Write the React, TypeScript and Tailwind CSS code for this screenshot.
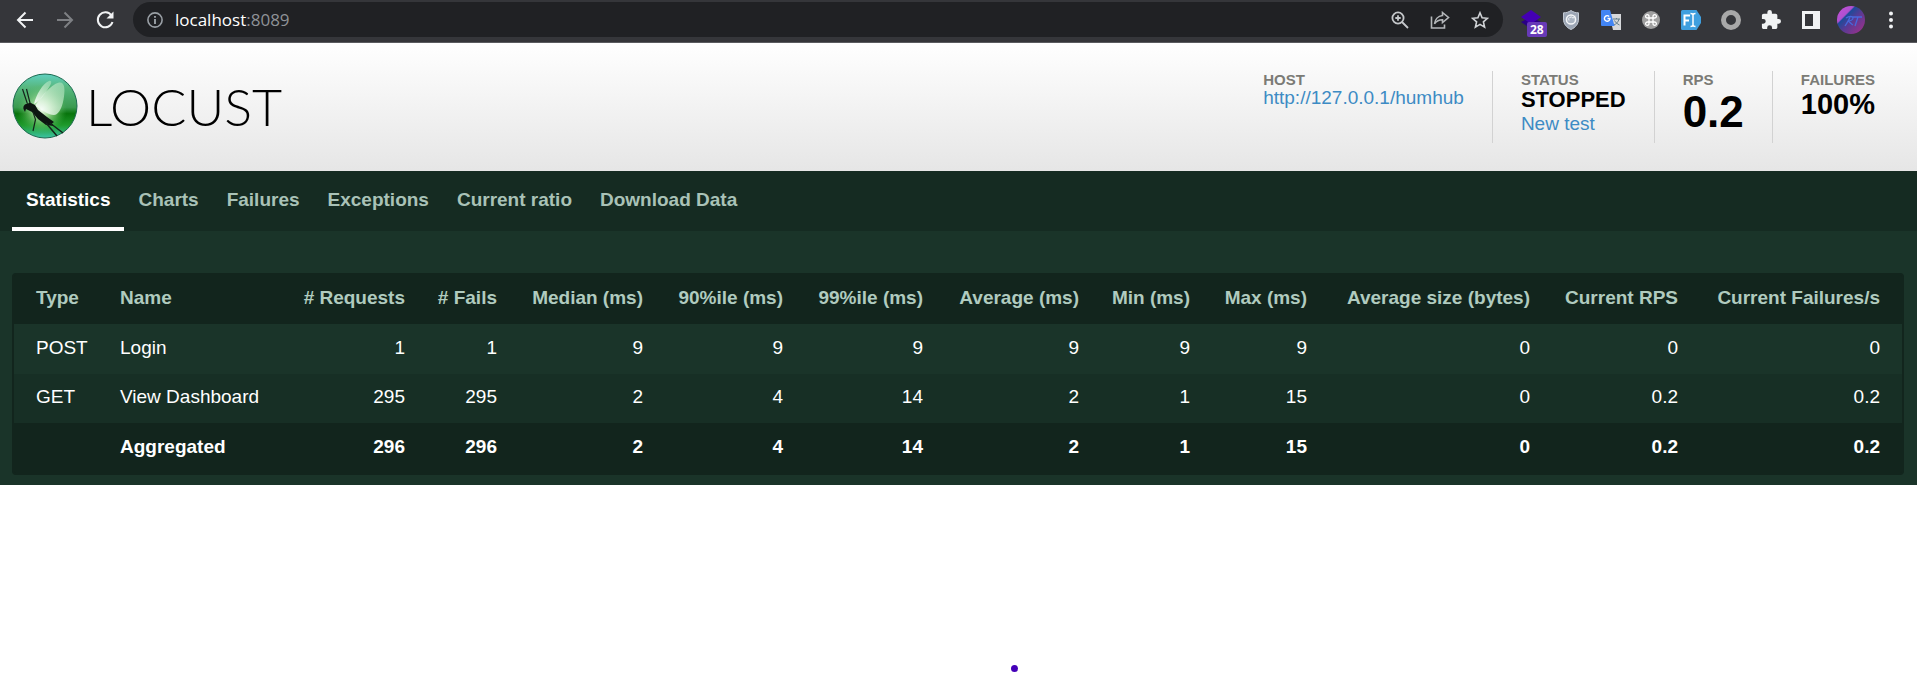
import type { ReactNode } from 'react';

const columns = [
  { label: 'Type', col: 'w-[84px]' },
  { label: 'Name', col: 'w-[184px]' },
  { label: '# Requests', col: 'w-[145px]' },
  { label: '# Fails', col: 'w-[92px]' },
  { label: 'Median (ms)', col: 'w-[146px]' },
  { label: '90%ile (ms)', col: 'w-[140px]' },
  { label: '99%ile (ms)', col: 'w-[140px]' },
  { label: 'Average (ms)', col: 'w-[156px]' },
  { label: 'Min (ms)', col: 'w-[111px]' },
  { label: 'Max (ms)', col: 'w-[117px]' },
  { label: 'Average size (bytes)', col: 'w-[223px]' },
  { label: 'Current RPS', col: 'w-[148px]' },
  { label: 'Current Failures/s', col: 'w-[202px]' },
];

const rows = [
  ['POST', 'Login', '1', '1', '9', '9', '9', '9', '9', '9', '0', '0', '0'],
  ['GET', 'View Dashboard', '295', '295', '2', '4', '14', '2', '1', '15', '0', '0.2', '0.2'],
];
const total = ['', 'Aggregated', '296', '296', '2', '4', '14', '2', '1', '15', '0', '0.2', '0.2'];

const tabs = ['Statistics', 'Charts', 'Failures', 'Exceptions', 'Current ratio', 'Download Data'];

function IconButton({ label, children }: { label: string; children: ReactNode }) {
  return (
    <button type="button" aria-label={label} className="flex h-[35px] w-10 shrink-0 items-center justify-center">
      {children}
    </button>
  );
}

function BrowserBar() {
  return (
    <div className="flex h-[43px] items-start gap-2 border-b border-[#5b5c60] bg-[#35363a] pt-[2px] pr-[6px] pl-[5px]">
      <div className="flex">
        <IconButton label="Back">
          <svg width="18" height="18" viewBox="0 0 18 18" fill="none" stroke="#f1f3f4" strokeWidth="2">
            <path d="M17 9H2M9.5 1.5 2 9l7.500 7.500" />
          </svg>
        </IconButton>
        <IconButton label="Forward">
          <svg width="18" height="18" viewBox="0 0 18 18" fill="none" stroke="#7e8084" strokeWidth="2">
            <path d="M1 9h15M8.500 1.500 16 9l-7.500 7.500" />
          </svg>
        </IconButton>
        <IconButton label="Reload">
          <svg width="20" height="20" viewBox="0 0 20 20" fill="none" stroke="#f1f3f4" strokeWidth="2">
            <path d="M16.500 5.500A7.500 7.500 0 1 0 17.500 12" />
            <path d="M18.500 1.500v7h-7z" fill="#f1f3f4" stroke="none" />
          </svg>
        </IconButton>
      </div>
      <div className="flex h-[35px] min-w-0 flex-1 items-center rounded-full bg-[#202124] pr-[3px] pl-[14px]">
        <svg width="16" height="16" viewBox="0 0 16 16" className="shrink-0" fill="none" stroke="#9aa0a6" strokeWidth="1.6">
          <circle cx="8" cy="8" r="7.100" />
          <path d="M8 7v5M8 4v1.800" strokeWidth="1.900" />
        </svg>
        <div className="min-w-0 flex-1 pl-3 font-['Open_Sans',sans-serif] text-[17px] leading-6 text-white">
          localhost<span className="text-[#8f9297]">:8089</span>
        </div>
        <IconButton label="Zoom">
          <svg width="18" height="18" viewBox="0 0 18 18" fill="none" stroke="#c4c7ca" strokeWidth="1.800">
            <circle cx="7" cy="7" r="5.600" />
            <path d="M11 11l6 6M4.300 7h5.400M7 4.300v5.400" />
          </svg>
        </IconButton>
        <IconButton label="Share">
          <svg width="20" height="18" viewBox="0 0 20 18" fill="none" stroke="#b4b7ba" strokeWidth="1.600">
            <path d="M1.500 5.500v11.500H14.500V13.500" />
            <path d="M12.500 1.500 18.500 6.500 12.500 11.500V8.700C9 8.700 6.500 10 4.500 12.800 5 8.500 8 5 12.500 4.500z" />
          </svg>
        </IconButton>
        <IconButton label="Bookmark">
          <svg width="18" height="18" viewBox="0 0 18 18" fill="none" stroke="#d0d3d6" strokeWidth="1.600">
            <path d="M9 1.800l2.100 5 5.300.5-4 3.600 1.200 5.300L9 13.400l-4.600 2.800 1.200-5.300-4-3.600 5.300-.5z" />
          </svg>
        </IconButton>
      </div>
      <div className="flex">
        <IconButton label="Layers, 28 items">
          <span className="relative flex h-7 w-7 items-center justify-center">
            <svg width="22" height="20" viewBox="0 0 22 20">
              <path d="M1 12l10-5 10 5-10 7z" fill="#2a0084" />
              <path d="M11 0l10 7-10 7L1 7z" fill="#4400b4" />
            </svg>
            <span className="absolute top-4 left-[10px] rounded-[2px] bg-[#673ab7] px-[3px] font-['Open_Sans',sans-serif] text-[12px] leading-[15px] font-bold text-white">
              28
            </span>
          </span>
        </IconButton>
        <IconButton label="Shield">
          <svg width="18" height="20" viewBox="0 0 18 20">
            <path d="M9 .5c2.500 1.800 5 2.300 7.500 2.300V9c0 5-3 8.500-7.500 10.500C4.500 17.500 1.500 14 1.500 9V2.800C4 2.800 6.500 2.300 9 .5z" fill="#9ba5b4" stroke="#c3cad3" />
            <circle cx="9" cy="9.500" r="4.600" fill="#aab4c1" stroke="#f4f6f8" strokeWidth="1.500" />
            <path d="M7 10.500A2.300 2.300 0 0 1 11 8.200l2.500-2.200" fill="none" stroke="#f4f6f8" />
          </svg>
        </IconButton>
        <IconButton label="Translate">
          <svg width="20" height="20" viewBox="0 0 20 20">
            <path d="M8 4h12v16h-8z" fill="#d6d8da" />
            <path d="M12 9h7M15.500 8v1M18 9c-.5 3-3 5-5 6M13.500 10.500c1 2 3 3.500 5 4.500" stroke="#607d8b" fill="none" />
            <path d="M0 1a1 1 0 0 1 1-1h8l4.500 16H1a1 1 0 0 1-1-1z" fill="#4285f4" />
            <path d="M8.200 6.500A2.800 2.800 0 1 0 9 8.500H6.500" stroke="#fff" strokeWidth="1.400" fill="none" />
          </svg>
        </IconButton>
        <IconButton label="Shortcuts">
          <svg width="18" height="18" viewBox="0 0 18 18">
            <circle cx="9" cy="9" r="9" fill="#a0a0a0" />
            <path d="M7 7h4v4H7zM7 7H5.500A1.700 1.700 0 1 1 7 5.500zM11 7V5.500A1.700 1.700 0 1 1 12.500 7zM11 11h1.500a1.700 1.700 0 1 1-1.500 1.500zM7 11v1.500A1.700 1.700 0 1 1 5.500 11z" fill="none" stroke="#fff" strokeWidth="1.300" />
          </svg>
        </IconButton>
        <IconButton label="Font finder">
          <svg width="20" height="20" viewBox="0 0 20 20">
            <path d="M1.500 0H15.500L20 7v6l-4.500 7H1.500A1.500 1.500 0 0 1 0 18.500v-17A1.500 1.500 0 0 1 1.500 0z" fill="#3f9fdf" />
            <path d="M3.500 15.500V5.500H9M3.500 10.500h4.500" stroke="#fff" strokeWidth="2" fill="none" />
            <path d="M9.500 3.500c2 0 2.500.5 2.500 1.500 0-1 .5-1.500 2.500-1.500M12 5v10M9.500 16.500c2 0 2.500-.5 2.500-1.500 0 1 .5 1.500 2.500 1.500" stroke="#fff" strokeWidth="1.500" fill="none" />
          </svg>
        </IconButton>
        <IconButton label="Recorder">
          <svg width="20" height="20" viewBox="0 0 20 20">
            <circle cx="10" cy="10" r="7.500" fill="none" stroke="#a8a8a8" strokeWidth="5" />
          </svg>
        </IconButton>
        <IconButton label="Extensions">
          <svg width="20" height="20" viewBox="1 1 22 22" fill="#f1f3f4">
            <path d="M20.500 11H19V7c0-1.100-.9-2-2-2h-4V3.500a2.500 2.500 0 0 0-5 0V5H4c-1.100 0-2 .9-2 2v3.800h1.500a2.700 2.700 0 0 1 0 5.400H2V20c0 1.100.9 2 2 2h3.800v-1.500a2.700 2.700 0 0 1 5.400 0V22H17c1.100 0 2-.9 2-2v-4h1.500a2.500 2.500 0 0 0 0-5z" />
          </svg>
        </IconButton>
        <IconButton label="Side panel">
          <svg width="18" height="18" viewBox="0 0 18 18">
            <path d="M0 0h18v18H0zM3 3v12h8V3z" fill="#f1f3f4" fillRule="evenodd" />
          </svg>
        </IconButton>
        <IconButton label="Profile">
          <svg width="28" height="28" viewBox="0 0 28 28">
            <defs>
              <linearGradient id="avatar" x1="0" y1="0" x2="1" y2="1">
                <stop offset="0" stopColor="#c64fd8" />
                <stop offset=".3" stopColor="#b050d0" />
                <stop offset=".34" stopColor="#1f4a9a" />
                <stop offset=".55" stopColor="#5a3a94" />
                <stop offset="1" stopColor="#a82f88" />
              </linearGradient>
            </defs>
            <circle cx="14" cy="14" r="14" fill="url(#avatar)" />
            <path d="M8 20c2-3 4-6 5-9M9 12c3-2 7-2 7 0s-3 3-5 3c2 1 3 3 5 4M16 11h9M21 11c-1 3-2 6-3 9" stroke="#4868dc" strokeWidth="1.300" fill="none" />
          </svg>
        </IconButton>
        <IconButton label="Menu">
          <svg width="4" height="18" viewBox="0 0 4 18" fill="#f1f3f4">
            <circle cx="2" cy="2.500" r="2" />
            <circle cx="2" cy="9" r="2" />
            <circle cx="2" cy="15.500" r="2" />
          </svg>
        </IconButton>
      </div>
    </div>
  );
}

function LocustMark() {
  return (
    <svg width="66" height="66" viewBox="0 0 66 66" aria-hidden="true">
      <defs>
        <radialGradient id="glow">
          <stop offset="0" stopColor="#ffffff" />
          <stop offset=".3" stopColor="#c4ecb4" stopOpacity=".85" />
          <stop offset="1" stopColor="#4fb855" stopOpacity="0" />
        </radialGradient>
        <linearGradient id="orb" x1="0" y1="0" x2="0" y2="1">
          <stop offset="0" stopColor="#5fd0c0" />
          <stop offset=".2" stopColor="#58b880" />
          <stop offset=".52" stopColor="#3a9a50" />
          <stop offset=".62" stopColor="#08740c" />
          <stop offset=".8" stopColor="#1f9a2c" />
          <stop offset="1" stopColor="#3cc4a4" />
        </linearGradient>
        <linearGradient id="wing" x1="0" y1="1" x2="1" y2="0">
          <stop offset="0" stopColor="#ffffff" stopOpacity=".9" />
          <stop offset="1" stopColor="#b8e8c0" stopOpacity=".5" />
        </linearGradient>
      </defs>
      <circle cx="33" cy="33" r="32" fill="url(#orb)" stroke="#1c6a50" />
      <circle cx="30" cy="36" r="25" fill="url(#glow)" />
      <path d="M22 31C24 22 31 10 37 8c4-1 2 4-1 8-4 6-8 12-14 15z" fill="url(#wing)" />
      <path d="M23 33C29 24 38 12 47 9.500c6-1 6 7 5 14-1 8-4 18-10 18.500-6 0-9-4-19-9z" fill="url(#wing)" />
      <path d="M11.500 36c-.5-3 1-5 3.500-5l3-1.500 5 2.500 3 5 9 7 7 5-2 1.500 2 2.500-8-1-8-6-6-7-6-3-1 3z" fill="#0d1511" />
      <path d="M15.500 31L10.500 16M18 30L14.500 16M21 39l2.500 7.500L21 58" stroke="#14241b" strokeWidth="1.200" fill="none" />
      <path d="M34 50l11 13M38 50l13 10" stroke="#14241b" strokeWidth="1.500" fill="none" />
    </svg>
  );
}

function Stat({ label, children }: { label: string; children: ReactNode }) {
  return (
    <div className="min-h-[72px] border-l border-[#d2d2d2] px-7 first:border-l-0">
      <div className="text-[15px] leading-[17px] font-bold text-[#7b7b76]">{label}</div>
      {children}
    </div>
  );
}

export default function App() {
  return (
    <div className="flex min-h-screen flex-col bg-white font-['Liberation_Sans',Arial,sans-serif] text-[19px]">
      <BrowserBar />
      <header className="flex h-32 items-start justify-between bg-linear-to-b from-white to-[#e6e6e6] pr-[14px] pl-3">
        <a href="#home" className="flex items-center gap-2 pt-[30px] text-black">
          <LocustMark />
          <span className="font-['Lato',sans-serif] text-[52px] leading-[60px] font-light">LOCUST</span>
        </a>
        <div className="flex pt-7">
          <Stat label="HOST">
            <a href="http://127.0.0.1/humhub" className="block leading-5 text-[#3d8bc4]">
              http://127.0.0.1/humhub
            </a>
          </Stat>
          <Stat label="STATUS">
            <div className="text-[22px] leading-6 font-bold text-black">STOPPED</div>
            <a href="#new-test" className="block leading-6 text-[#3d8bc4]">
              New test
            </a>
          </Stat>
          <Stat label="RPS">
            <div className="text-[44px] leading-[48px] font-bold text-black">0.2</div>
          </Stat>
          <Stat label="FAILURES">
            <div className="text-[29px] leading-[33px] font-bold text-black">100%</div>
          </Stat>
        </div>
      </header>
      <nav className="flex h-[60px] bg-[#152b22] px-3">
        {tabs.map((tab, i) => (
          <a
            key={tab}
            href={'#' + tab}
            className={
              i === 0
                ? 'border-b-4 border-white px-[14px] pt-[18px] leading-[22px] font-bold text-white'
                : 'px-[14px] pt-[18px] leading-[22px] font-bold text-[#a9c2b7]'
            }
          >
            {tab}
          </a>
        ))}
      </nav>
      <main className="bg-[#1a3429] pt-[42px] pr-[13px] pb-[10px] pl-3">
        <div className="overflow-hidden rounded-[4px] border-2 border-[#12251d] bg-[#12251d] text-white">
          <table className="w-full table-fixed border-collapse">
            <colgroup>
              {columns.map((c) => (
                <col key={c.label} className={c.col} />
              ))}
            </colgroup>
            <thead>
              <tr className="h-[49px] text-[#b0cbbf]">
                {columns.map((c, i) => (
                  <th
                    key={c.label}
                    scope="col"
                    className={i < 2 ? 'pb-[2px] pl-[22px] text-left font-bold whitespace-nowrap' : 'pr-[22px] pb-[2px] text-right font-bold whitespace-nowrap'}
                  >
                    {c.label}
                  </th>
                ))}
              </tr>
            </thead>
            <tbody>
              {rows.map((row, r) => (
                <tr key={row[1]} className={r % 2 === 0 ? 'h-[50px] bg-[#1a3429]' : 'h-[49px] bg-[#172f25]'}>
                  {row.map((cell, i) => (
                    <td key={i} className={i < 2 ? 'pb-[2px] pl-[22px] whitespace-nowrap' : 'pr-[22px] pb-[2px] text-right'}>
                      {cell}
                    </td>
                  ))}
                </tr>
              ))}
            </tbody>
            <tfoot>
              <tr className="h-[50px] font-bold">
                {total.map((cell, i) => (
                  <td key={i} className={i < 2 ? 'pb-[2px] pl-[22px]' : 'pr-[22px] pb-[2px] text-right'}>
                    {cell}
                  </td>
                ))}
              </tr>
            </tfoot>
          </table>
        </div>
      </main>
      <footer className="flex flex-1 items-end justify-center pb-px pl-28">
        <span className="h-[7px] w-[7px] rounded-full bg-[#4400b8]" />
      </footer>
    </div>
  );
}
